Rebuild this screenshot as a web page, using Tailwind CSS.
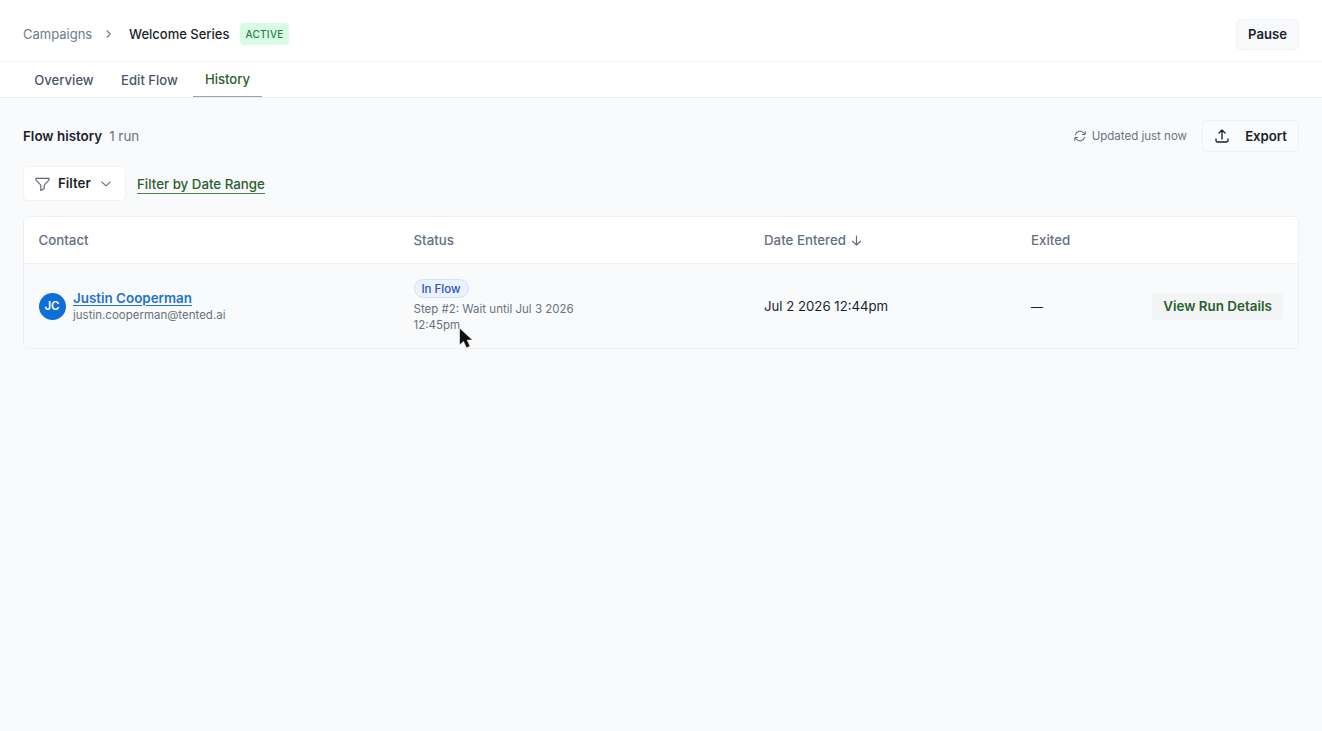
<!DOCTYPE html>
<html lang="en">
<head>
  <meta charset="UTF-8" />
  <title>Welcome Series - History</title>
  <script src="https://cdn.jsdelivr.net/npm/@tailwindcss/browser@4"></script>
</head>
<body class="h-screen overflow-hidden bg-[#f9fafc] font-['Inter',sans-serif] text-[13.4px] text-[#1b1f2b]">
  <header class="flex h-[62px] items-center justify-between border-b border-[#f2f4f6] bg-white px-[23px] pt-[7px]">
    <nav class="flex items-center text-[13px]">
      <a class="w-[69px] pt-[2px] text-[#6f7a8d]">Campaigns</a>
      <svg class="ml-[11px] h-3 w-3 text-[#6f7a8d]" viewBox="0 0 12 12" fill="none" stroke="currentColor" stroke-width="1.2" stroke-linecap="round" stroke-linejoin="round"><path d="M4.2 3 7.2 6 4.2 9" /></svg>
      <span class="ml-[14px] w-[100px] whitespace-nowrap pt-[2px] font-medium">Welcome Series</span>
      <span class="ml-[11px] flex h-[22px] w-[49px] items-center justify-center rounded bg-[#d8fbe4] pt-px text-[10px] font-medium tracking-[0.3px] text-[#2f7d4d]">ACTIVE</span>
    </nav>
    <button class="h-[31px] w-[63px] rounded-[5px] border border-[#f1f3f5] bg-[#f8f9fb] pt-[2px] text-[13.1px] font-semibold">Pause</button>
  </header>

  <div class="flex h-9 border-b border-[#eaedf0] bg-white pl-[23px] text-[13.1px] font-medium text-[#4c566a]">
    <a class="flex h-[35px] w-[82px] items-center justify-center pt-[2px]">Overview</a>
    <a class="ml-1 flex h-[35px] w-[81px] items-center justify-center pt-[2px]">Edit Flow</a>
    <a class="ml-[3px] flex h-[35px] w-[69px] items-center justify-center border-b border-[#9aa79e] pt-[2px] text-[#2a602c]">History</a>
  </div>

  <main class="px-[23px] pt-[22px]">
    <div class="flex h-8 items-center justify-between">
      <div class="flex items-baseline gap-[7px]">
        <h1 class="font-semibold">Flow history</h1>
        <span class="text-[#6b7280]">1 run</span>
      </div>
      <div class="flex items-center">
        <svg class="h-[14px] w-[14px] text-[#747b88]" viewBox="0 0 24 24" fill="none" stroke="currentColor" stroke-width="1.9" stroke-linecap="round" stroke-linejoin="round"><path d="M16.02 9.35h4.99M2.99 19.64v-4.99m0 0h4.99m-4.99 0 3.18 3.18a8.25 8.25 0 0 0 13.8-3.7M4.03 9.87a8.25 8.25 0 0 1 13.8-3.7l3.18 3.18m0-4.99v4.99" /></svg>
        <span class="ml-[5px] pt-px text-[11.5px] text-[#6b7280]">Updated just now</span>
        <button class="ml-[15px] flex h-8 w-[97px] items-center justify-between rounded-[5px] border border-[#eff1f4] bg-[#fafbfc] px-[11px] text-[13.2px] font-semibold">
          <svg class="h-4 w-4" viewBox="0 0 24 24" fill="none" stroke="currentColor" stroke-width="2" stroke-linecap="round" stroke-linejoin="round"><path d="M3 16.5v2.25A2.25 2.25 0 0 0 5.25 21h13.5A2.25 2.25 0 0 0 21 18.75V16.5M7.5 7.5 12 3l4.5 4.5M12 3v13.5" /></svg>
          <span class="pt-px">Export</span>
        </button>
      </div>
    </div>

    <div class="mt-[14px] flex h-[35px] items-center">
      <button class="flex h-[35px] w-[103px] items-center rounded-[5px] border border-[#f1f3f5] bg-white pl-[11px] pt-px text-[13.3px] font-semibold">
        <svg class="h-[15px] w-[15px] text-[#5f6672]" viewBox="0 0 15 15" fill="none" stroke="currentColor" stroke-width="1.1" stroke-linejoin="round"><path d="M.9 1.4h13.2v1.5L9.2 8.1v3.6L5.8 13.6V8.1L.9 2.9z" /></svg>
        <span class="ml-2">Filter</span>
        <svg class="ml-[9px] h-3 w-3 text-[#6b7280]" viewBox="0 0 12 12" fill="none" stroke="currentColor" stroke-width="1.1" stroke-linecap="round" stroke-linejoin="round"><path d="m1.8 4 4.2 3.8 4.2-3.8" /></svg>
      </button>
      <a class="ml-[11px] mt-[2px] border-b border-[#4f7d51] text-[13.3px] font-medium leading-[18px] text-[#2a602c]">Filter by Date Range</a>
    </div>

    <div class="mt-[15px] overflow-hidden rounded-[6px] border border-[#eef0f3]">
      <div class="grid h-[47px] grid-cols-[375px_350.5px_267px_1fr] items-center border-b border-[#eff1f4] bg-white pl-[14.5px] pt-px text-[13.3px] font-medium text-[#647084]">
        <span>Contact</span>
        <span>Status</span>
        <span class="flex items-center gap-[5px]">Date Entered
          <svg class="h-[11px] w-[11px]" viewBox="0 0 11 11" fill="none" stroke="currentColor" stroke-width="1.2" stroke-linecap="round" stroke-linejoin="round"><path d="M5.5 1v9M1.5 6.2l4 3.8 4-3.8" /></svg>
        </span>
        <span>Exited</span>
      </div>
      <div class="grid h-[84px] grid-cols-[375px_350.5px_267px_1fr_146px] items-center bg-[#f9fafb] pl-[14.5px]">
        <div class="flex items-center">
          <span class="flex h-[27px] w-[27px] items-center justify-center rounded-full bg-[#0d70da] pt-px text-[11.5px] font-semibold text-white">JC</span>
          <div class="ml-[7.5px] pt-px">
            <a class="block font-semibold leading-[17px] text-[#2273cf] underline underline-offset-2">Justin Cooperman</a>
            <div class="text-[11.5px] leading-[17px] text-[#6b7280]">justin.cooperman@tented.ai</div>
          </div>
        </div>
        <div class="relative w-[180px] text-[11.5px] leading-[16px] text-[#6b7280]">
          <span class="mb-[3px] flex h-[19px] w-[55px] items-center justify-center rounded-full border border-[#cfe1fa] bg-[#ebf3fe] font-medium text-[#2f50c4]">In Flow</span>
          <p>Step #2: Wait until Jul 3 2026 12:45pm</p>
          <svg class="absolute left-[44px] top-[48px] h-[22px] w-[16px]" viewBox="0 0 15 22"><path d="M1 1v17l4-3.6 3 6.5 3.6-1.6-2.9-6.2h5.4z" fill="#111" stroke="#fff" stroke-width=".6" /></svg>
        </div>
        <span class="pt-px text-[13.2px]">Jul 2 2026 12:44pm</span>
        <span class="pt-px text-[12px] font-medium">—</span>
        <button class="h-[27px] w-[131px] rounded bg-[#f3f4f6] font-semibold text-[#2a602c]">View Run Details</button>
      </div>
    </div>
  </main>
</body>
</html>
